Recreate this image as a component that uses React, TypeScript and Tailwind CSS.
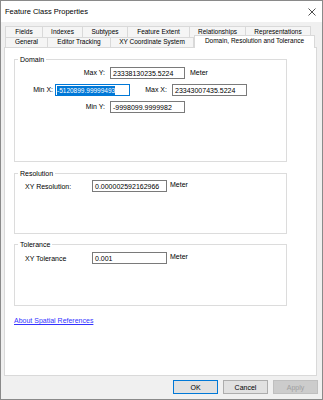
import React from 'react';

const row1 = [
  { label: 'Fields', w: 'w-[38px]' },
  { label: 'Indexes', w: 'w-[41px]' },
  { label: 'Subtypes', w: 'w-[46px]' },
  { label: 'Feature Extent', w: 'w-[63px]' },
  { label: 'Relationships', w: 'w-[57px]' },
  { label: 'Representations', w: 'w-[66px]' },
];

const row2 = [
  { label: 'General', w: 'w-[43px]' },
  { label: 'Editor Tracking', w: 'w-[64px]' },
  { label: 'XY Coordinate System', w: 'w-[84px]' },
];

function Field({ value, selected }: { value: string; selected?: boolean }) {
  return (
    <div
      className={
        'h-[12px] w-[75px] flex items-center bg-white px-[2px] leading-none overflow-hidden whitespace-nowrap ' +
        (selected ? 'border border-[#0078d7] pl-[1px]' : 'border border-[#7a7a7a]')
      }
    >
      {selected ? (
        <span className="bg-[#0078d7] text-white leading-[9px] text-[6.5px]">{value}</span>
      ) : (
        <span>{value}</span>
      )}
    </div>
  );
}

function Group({ title, className, children }: { title: string; className: string; children?: React.ReactNode }) {
  return (
    <div className={'relative border border-[#dcdcdc] ' + className}>
      <span className="absolute -top-[5px] left-[3px] bg-white px-[2px] leading-[9px] text-[#000]">{title}</span>
      {children}
    </div>
  );
}

export default function App() {
  return (
    <div
      className="w-[323px] h-[400px] flex flex-col bg-[#f0f0f0] border border-[#8a8a8a] text-[7px] text-black overflow-hidden"
      style={{ fontFamily: '"Liberation Sans", Arial, sans-serif' }}
    >
      <div className="h-[21px] bg-white flex items-center justify-between pl-[4px] pr-[5px] shrink-0">
        <span className="text-[7.5px]">Feature Class Properties</span>
        <svg width="8" height="8" viewBox="0 0 8 8" className="mr-[1px]">
          <path d="M0.5 0.5 L7.5 7.5 M7.5 0.5 L0.5 7.5" stroke="#222" strokeWidth="0.8" />
        </svg>
      </div>

      <div className="pt-[4px] pl-[4px] flex flex-col text-[6.5px]">
        <div className="flex h-[11px]">
          {row1.map((t) => (
            <div
              key={t.label}
              className={t.w + ' h-[11px] border-t border-l border-r -mr-px border-[#d9d9d9] bg-[#f5f5f5] flex items-center justify-center leading-none whitespace-nowrap'}
            >
              {t.label}
            </div>
          ))}
        </div>
        <div className="flex h-[10px]">
          {row2.map((t) => (
            <div
              key={t.label}
              className={t.w + ' h-[10px] border-t border-l border-r -mr-px border-[#d9d9d9] bg-[#f5f5f5] flex items-center justify-center leading-none whitespace-nowrap'}
            >
              {t.label}
            </div>
          ))}
          <div className="relative z-10 w-[121px] h-[13px] -mt-[2px] ml-px border-t border-l border-r border-[#d9d9d9] bg-white flex items-start justify-center pt-[2px] leading-none whitespace-nowrap">
            Domain, Resolution and Tolerance
          </div>
        </div>
      </div>

      <div className="ml-[3px] w-[313px] h-[329px] bg-white border border-[#d9d9d9] flex flex-col pl-[9px] pt-[11px] shrink-0">
        <Group title="Domain" className="w-[273px] h-[103px] pt-[7px] flex flex-col gap-[5px]">
          <div className="flex items-center">
            <span className="w-[95px] text-right pr-[5px]">Max Y:</span>
            <Field value="23338130235.5224" />
            <span className="ml-[5px]">Meter</span>
          </div>
          <div className="flex items-center">
            <span className="w-[40px] text-right pr-[2px]">Min X:</span>
            <Field value="-5120899.99999493" selected />
            <span className="w-[42px] text-right pr-[5px]">Max X:</span>
            <Field value="23343007435.5224" />
          </div>
          <div className="flex items-center">
            <span className="w-[95px] text-right pr-[5px]">Min Y:</span>
            <Field value="-9998099.9999982" />
          </div>
        </Group>

        <Group title="Resolution" className="mt-[11px] w-[273px] h-[61px] pt-[6px] pl-[10px]">
          <div className="flex items-start">
            <span className="w-[67px] pt-[2px]">XY Resolution:</span>
            <Field value="0.000002592162966" />
            <span className="ml-[3px]">Meter</span>
          </div>
        </Group>

        <Group title="Tolerance" className="mt-[10px] w-[273px] h-[62px] pt-[7px] pl-[10px]">
          <div className="flex items-start">
            <span className="w-[67px] pt-[2px]">XY Tolerance</span>
            <Field value="0.001" />
            <span className="ml-[3px]">Meter</span>
          </div>
        </Group>

        <a className="mt-[11px] text-[#3333ff] underline leading-none self-start">About Spatial References</a>
      </div>

      <div className="flex justify-end gap-[5px] pr-[4px] pt-[4px]">
        <button className="w-[45px] h-[14px] border border-[#0078d7] bg-[#e1e1e1] leading-none">OK</button>
        <button className="w-[45px] h-[14px] border border-[#adadad] bg-[#e1e1e1] leading-none">Cancel</button>
        <button className="w-[45px] h-[14px] border border-[#bfbfbf] bg-[#cccccc] text-[#a0a0a0] leading-none">Apply</button>
      </div>
    </div>
  );
}
